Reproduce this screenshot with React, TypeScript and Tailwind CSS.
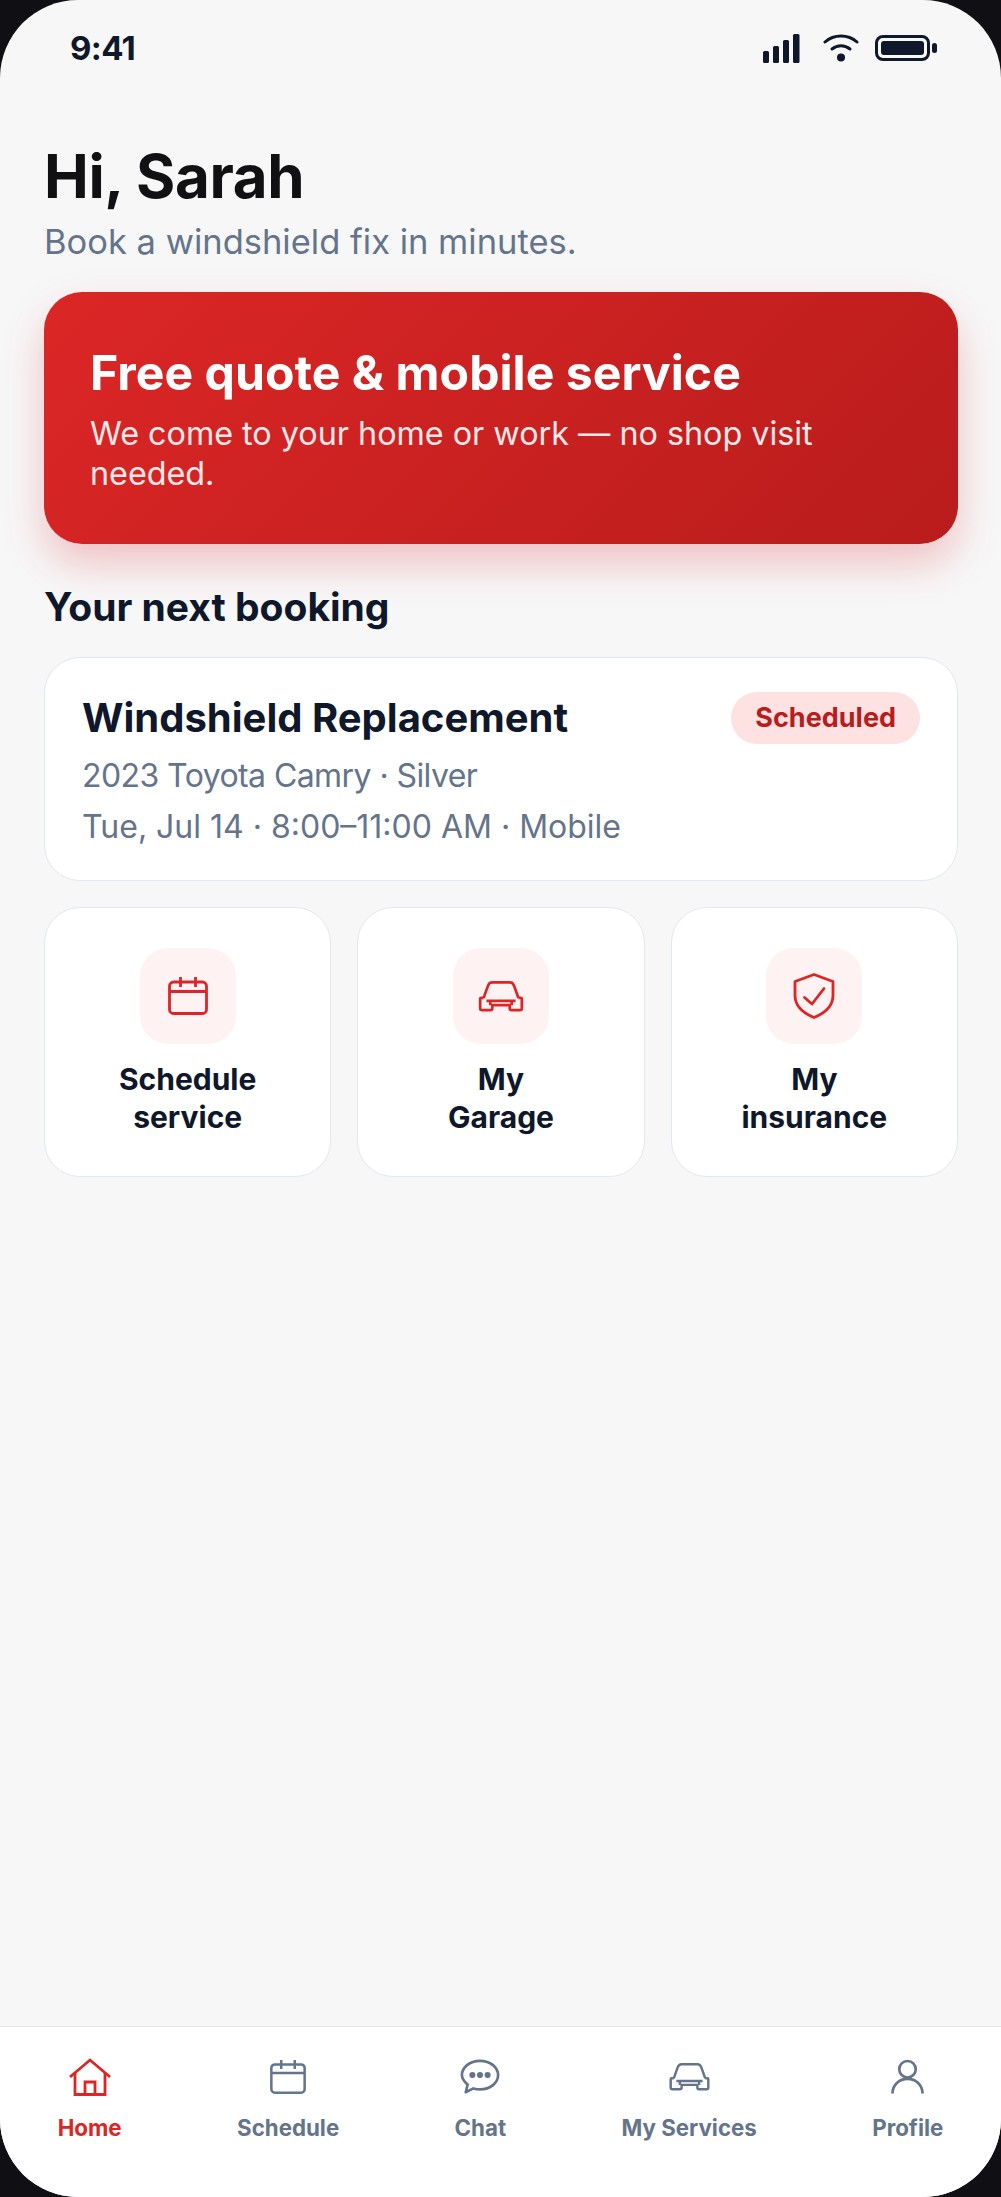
const pageFont = { fontFamily: 'Inter, "Liberation Sans", sans-serif' };

function Calendar({ className }: { className: string }) {
  return (
    <svg viewBox="0 0 40 38" fill="none" stroke="currentColor" strokeWidth="2.8" className={className}>
      <rect x="1.5" y="5" width="37" height="31.500" rx="4" />
      <path d="M1.5 14.500h37M12.500 0v10M27.500 0v10" />
    </svg>
  );
}

function Car({ className }: { className: string }) {
  return (
    <svg viewBox="0 0 46 32" fill="none" stroke="currentColor" strokeWidth="2.800" strokeLinejoin="round" className={className}>
      <path d="M5 17.500L9.500 5c.8-2.200 2.200-3.500 4.500-3.500h18c2.300 0 3.700 1.300 4.500 3.500L41 17.500" />
      <path d="M5 17.500H2.500c-.600 0-1 .400-1 1V28c0 1.100.900 2 2 2H12c1.100 0 2-.900 2-2v-3h18v3c0 1.100.900 2 2 2h8.500c1.100 0 2-.900 2-2v-9.500c0-.600-.400-1-1-1H41" />
      <path d="M8 20.500h30M12 20.500V25M34 20.500V25" />
    </svg>
  );
}

function Shield({ className }: { className: string }) {
  return (
    <svg viewBox="0 0 42 46" fill="none" stroke="currentColor" strokeWidth="2.800" strokeLinejoin="round" strokeLinecap="round" className={className}>
      <path d="M21 1.500L40 8.500v14c0 10.500-8 17.500-19 22C10 40 2 33 2 22.500v-14z" />
      <path d="M11.500 24.500L19 31 31 15.500" />
    </svg>
  );
}

function Home({ className }: { className: string }) {
  return (
    <svg viewBox="0 0 42 38" fill="none" stroke="currentColor" strokeWidth="2.800" className={className}>
      <path d="M1 19L21 2l20 17" />
      <path d="M6 15v21.500h30V15" />
      <path d="M16 36.500V24h10v12.500" />
    </svg>
  );
}

function Chat({ className }: { className: string }) {
  return (
    <svg viewBox="0 0 42 38" fill="none" stroke="currentColor" strokeWidth="2.800" className={className}>
      <path d="M21 2c11 0 19 7 19 15s-8 15-19 15c-2.500 0-4.500-.300-7-1l-8 4 2-8c-3.500-3-6-6-6-10C2 9 10 2 21 2z" strokeLinejoin="round" />
      <circle cx="13" cy="17" r="3.200" fill="currentColor" stroke="none" />
      <circle cx="21" cy="17" r="3.200" fill="currentColor" stroke="none" />
      <circle cx="29" cy="17" r="3.200" fill="currentColor" stroke="none" />
    </svg>
  );
}

function User({ className }: { className: string }) {
  return (
    <svg viewBox="0 0 34 36" fill="none" stroke="currentColor" strokeWidth="2.800" className={className}>
      <circle cx="17" cy="10" r="8.500" />
      <path d="M1.500 35c0-9 7-15 15.500-15s15.500 6 15.500 15" />
    </svg>
  );
}

function StatusIcons() {
  return (
    <div className="flex items-center">
      <svg width="37" height="29" viewBox="0 0 37 29" fill="#0f172a">
        <rect x="0" y="17" width="6" height="12" rx="1.500" />
        <rect x="10" y="12" width="6" height="17" rx="1.500" />
        <rect x="20" y="6" width="6" height="23" rx="1.500" />
        <rect x="30" y="0" width="6.500" height="29" rx="1.500" />
      </svg>
      <svg width="36" height="28" viewBox="0 0 36 28" fill="none" stroke="#0f172a" strokeWidth="3" strokeLinecap="round" className="ml-[23px]">
        <path d="M2 8c9-8 23-8 32 0" />
        <path d="M9 15c5.500-4.500 12.500-4.500 18 0" />
        <circle cx="18" cy="23.500" r="4" fill="#0f172a" stroke="none" />
      </svg>
      <div className="ml-[16px] flex items-center">
        <div className="flex h-[26px] w-[55px] rounded-[8px] border-[3px] border-[#0f172a] p-[3px]">
          <div className="flex-1 rounded-[3px] bg-[#0f172a]" />
        </div>
        <div className="ml-[2px] h-[10px] w-[5px] rounded-full bg-[#0f172a]" />
      </div>
    </div>
  );
}

const tiles = [
  { icon: <Calendar className="h-[38px] w-[40px]" />, lines: ["Schedule", "service"] },
  { icon: <Car className="h-[31px] w-[46px]" />, lines: ["My", "Garage"] },
  { icon: <Shield className="h-[46px] w-[42px]" />, lines: ["My", "insurance"] },
];

const navItems = [
  { label: "Home", icon: <Home className="h-[38px] w-[42px]" />, active: true },
  { label: "Schedule", icon: <Calendar className="h-[38px] w-[36px]" /> },
  { label: "Chat", icon: <Chat className="h-[38px] w-[40px]" /> },
  { label: "My Services", icon: <Car className="h-[28px] w-[41px]" /> },
  { label: "Profile", icon: <User className="h-[36px] w-[33px]" /> },
];

export default function App() {
  return (
    <div className="h-[2197px] w-[1001px] overflow-hidden bg-[#0f0f14]" style={pageFont}>
      <div className="flex h-full flex-col rounded-[78px] bg-[#f7f7f8] overflow-hidden">
        {/* Status bar */}
        <div className="flex h-[96px] items-center justify-between pl-[70px] pr-[64px]">
          <span className="mt-[2px] text-[33px] font-bold tracking-[-0.02em] text-[#0f172a]">9:41</span>
          <StatusIcons />
        </div>

        <main className="flex-1 pl-[44px] pr-[43px] pt-[46px]">
          <h1 className="text-[60px] leading-[68px] font-bold tracking-[-0.006em] text-[#111113]">Hi, Sarah</h1>
          <p className="mt-[10px] text-[34.5px] leading-[44px] text-[#64748b]">Book a windshield fix in minutes.</p>

          {/* Promo banner */}
          <div className="mt-[28px] h-[252px] rounded-[38px] bg-[linear-gradient(135deg,#dc2626,#b91c1c)] px-[46px] pt-[53px] text-white shadow-[0_20px_40px_rgba(220,38,38,0.25)]">
            <h2 className="text-[48.2px] leading-[56px] font-bold">Free quote &amp; mobile service</h2>
            <p className="mt-[13px] text-[32.3px] leading-[40px] text-white/90">We come to your home or work — no shop visit needed.</p>
          </div>

          <h3 className="mt-[39px] text-[39px] leading-[48px] font-bold text-[#0f172a]">Your next booking</h3>

          {/* Booking card */}
          <div className="mt-[26px] h-[224px] rounded-[36px] border border-[#e2e8f0] bg-white px-[37px] pt-[34px]">
            <div className="flex items-center justify-between">
              <span className="text-[40px] font-bold leading-[52px] text-[#0f172a]">Windshield Replacement</span>
              <span className="flex h-[52px] items-center rounded-full bg-[#fee2e2] px-[24px] text-[27px] font-bold text-[#b91c1c]">Scheduled</span>
            </div>
            <p className="mt-[7px] text-[32px] leading-[50px] tracking-[-0.018em] text-[#64748b]">2023 Toyota Camry · Silver</p>
            <p className="mt-[1px] text-[32px] leading-[50px] text-[#64748b]">Tue, Jul 14 · 8:00–11:00 AM · Mobile</p>
          </div>

          {/* Quick actions */}
          <div className="mt-[26px] grid grid-cols-3 gap-[26px]">
            {tiles.map((tile) => (
              <div key={tile.lines[1]} className="flex h-[270px] flex-col items-center rounded-[36px] border border-[#e2e8f0] bg-white pt-[40px]">
                <div className="flex h-[96px] w-[96px] items-center justify-center rounded-[28px] bg-[#fef2f2] text-[#dc2626]">{tile.icon}</div>
                <p className="mt-[16px] text-center text-[30px] leading-[38px] font-bold text-[#0f172a]">
                  {tile.lines[0]}
                  <br />
                  {tile.lines[1]}
                </p>
              </div>
            ))}
          </div>
        </main>

        {/* Tab bar */}
        <nav className="flex h-[171px] justify-around border-t border-[#e2e8f0] bg-white pt-[30px]">
          {navItems.map((item) => (
            <div key={item.label} className={`flex flex-col items-center ${item.active ? "text-[#dc2626]" : "text-[#64748b]"}`}>
              <div className="flex h-[40px] items-center justify-center">{item.icon}</div>
              <span className="mt-[17px] text-[22.3px] leading-[28px] font-bold">{item.label}</span>
            </div>
          ))}
        </nav>
      </div>
    </div>
  );
}
